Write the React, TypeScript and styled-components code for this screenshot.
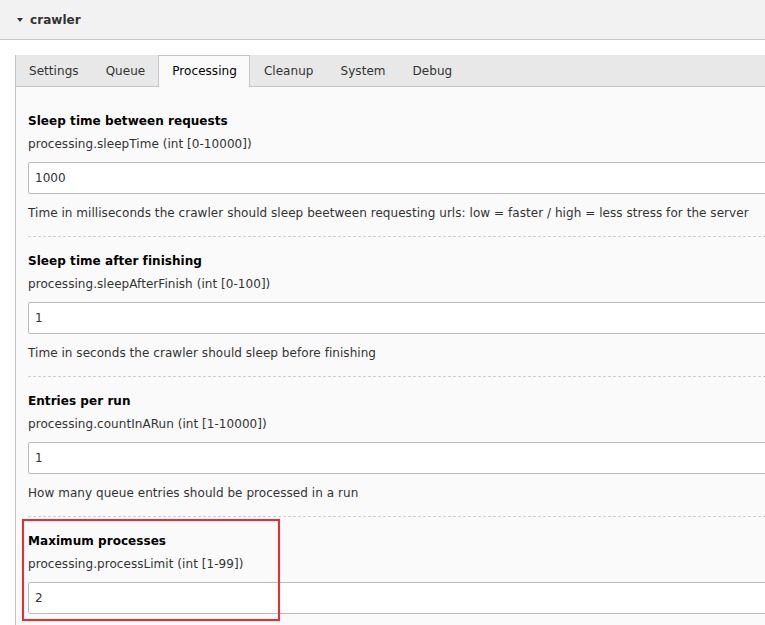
import React from 'react';
import styled, { createGlobalStyle } from 'styled-components';

const GlobalStyle = createGlobalStyle`
  html, body {
    margin: 0;
    padding: 0;
    background: #fff;
    overflow: hidden;
  }
  body {
    font-family: Verdana, "DejaVu Sans", sans-serif;
    font-size: 11px;
    color: #333;
    letter-spacing: 0.05px;
  }
`;

const fields = [
  {
    title: 'Sleep time between requests',
    code: 'processing.sleepTime (int [0-10000])',
    value: '1000',
    desc: 'Time in milliseconds the crawler should sleep beetween requesting urls: low = faster / high = less stress for the server',
  },
  {
    title: 'Sleep time after finishing',
    code: 'processing.sleepAfterFinish (int [0-100])',
    value: '1',
    desc: 'Time in seconds the crawler should sleep before finishing',
  },
  {
    title: 'Entries per run',
    code: 'processing.countInARun (int [1-10000])',
    value: '1',
    desc: 'How many queue entries should be processed in a run',
  },
  {
    title: 'Maximum processes',
    code: 'processing.processLimit (int [1-99])',
    value: '2',
    desc: '',
    marked: true,
  },
];

const tabs = ['Settings', 'Queue', 'Processing', 'Cleanup', 'System', 'Debug'];

const App: React.FC = () => {
  return (
    <>
      <GlobalStyle />
      <Header>
        <Caret />
        <HeaderTitle>crawler</HeaderTitle>
      </Header>
      <Body>
        <TabPanel>
          <TabBar>
            {tabs.map((t) => (
              <Tab key={t} active={t === 'Processing'}>{t}</Tab>
            ))}
          </TabBar>
          <Content>
            {fields.map((f, i) => (
              <Field key={f.title} last={i === fields.length - 1}>
                {f.marked && <Highlight />}
                <FieldTitle>{f.title}</FieldTitle>
                <FieldCode>{f.code}</FieldCode>
                <Input defaultValue={f.value} />
                {f.desc && <FieldDesc>{f.desc}</FieldDesc>}
              </Field>
            ))}
          </Content>
        </TabPanel>
      </Body>
    </>
  );
};

const Header = styled.div`
  height: 39px;
  background: #f2f2f2;
  border-bottom: 1px solid #c8c8c8;
  display: flex;
  align-items: center;
  padding-left: 17px;
  gap: 7px;
`;

const Caret = styled.span`
  width: 0;
  height: 0;
  border-left: 3.5px solid transparent;
  border-right: 3.5px solid transparent;
  border-top: 4px solid #333;
  margin-top: 1px;
`;

const HeaderTitle = styled.span`
  font-weight: bold;
  font-size: 12px;
  color: #333;
`;

const Body = styled.div`
  padding: 15px 0 0 15px;
`;

const TabPanel = styled.div`
  width: 900px;
  border-left: 1px solid #c3c3c3;
`;

const TabBar = styled.div`
  display: flex;
  height: 31px;
  background: #e8e8e8;
  border-bottom: 1px solid #c3c3c3;
`;

const Tab = styled.div<{ active?: boolean }>`
  display: flex;
  align-items: center;
  padding: 0 12px 2px 13px;
  font-size: 12px;
  color: ${(p) => (p.active ? '#000' : '#333')};
  background: ${(p) => (p.active ? '#fafafa' : 'transparent')};
  border: 1px solid ${(p) => (p.active ? '#c3c3c3' : 'transparent')};
  border-bottom: none;
  height: 32px;
  box-sizing: border-box;
  margin-bottom: -1px;
  &:first-child {
    border-left: none;
  }
`;

const Content = styled.div`
  background: #fafafa;
  padding: 26px 0 0 12px;
  height: 600px;
`;

const Field = styled.div<{ last?: boolean }>`
  position: relative;
  padding-bottom: 15px;
  margin-bottom: 16px;
  border-bottom: ${(p) => (p.last ? 'none' : '1px dashed #d0d0d0')};
`;

const Highlight = styled.div`
  position: absolute;
  top: -14px;
  left: -6px;
  width: 258px;
  height: 102px;
  box-sizing: border-box;
  border: 2px solid #f42a2a;
  pointer-events: none;
  z-index: 2;
`;

const FieldTitle = styled.div`
  font-weight: bold;
  font-size: 12px;
  line-height: 16px;
  color: #000;
`;

const FieldCode = styled.div`
  margin-top: 7px;
  font-size: 12px;
  line-height: 16px;
  color: #333;
`;

const Input = styled.input`
  display: block;
  margin-top: 10px;
  width: 100%;
  height: 32px;
  box-sizing: border-box;
  border: 1px solid #bbb;
  border-radius: 2px;
  background: #fff;
  padding: 0 6px;
  font-family: inherit;
  font-size: 12px;
  color: #333;
  outline: none;
`;

const FieldDesc = styled.div`
  margin-top: 11px;
  font-size: 12px;
  line-height: 16px;
  color: #333;
`;

export default App;
